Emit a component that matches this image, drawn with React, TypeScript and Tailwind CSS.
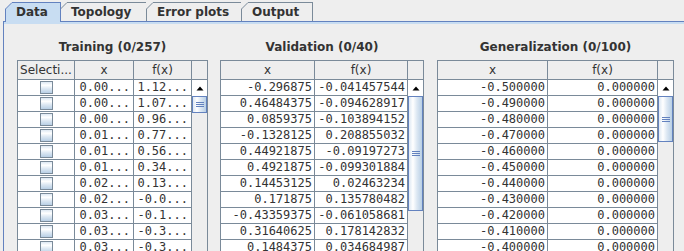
import { Fragment } from "react";

const sans = "font-['DejaVu_Sans',_'Liberation_Sans',_sans-serif]";
const mono = "font-['DejaVu_Sans_Mono',_'Liberation_Mono',_monospace]";

type Col = { label: string; w: string };

const training = {
  x: ["0.00...", "0.00...", "0.00...", "0.01...", "0.01...", "0.01...", "0.02...", "0.02...", "0.03...", "0.03...", "0.03..."],
  f: ["1.12...", "1.07...", "0.96...", "0.77...", "0.56...", "0.34...", "0.13...", "-0.0...", "-0.1...", "-0.3...", "-0.3..."],
};

const validation = [
  ["-0.296875", "-0.041457544"],
  ["0.46484375", "-0.094628917"],
  ["0.0859375", "-0.103894152"],
  ["-0.1328125", "0.208855032"],
  ["0.44921875", "-0.09197273"],
  ["0.4921875", "-0.099301884"],
  ["0.14453125", "0.02463234"],
  ["0.171875", "0.135780482"],
  ["-0.43359375", "-0.061058681"],
  ["0.31640625", "0.178142832"],
  ["0.1484375", "0.034684987"],
];

const generalization = Array.from({ length: 11 }, (_, i) => [
  (-0.5 + i * 0.01).toFixed(6),
  "0.000000",
]);

const Checkbox = () => (
  <div className="w-[13px] h-[13px] border border-[#7a8a99] bg-[linear-gradient(to_bottom,#dde8f3_0%,#ffffff_30%,#dde8f3_60%,#b8cfe5_100%)]" />
);

const Grip = () => (
  <svg width="8" height="5" viewBox="0 0 8 5">
    <rect x="0" y="0" width="8" height="1" fill="#6382bf" />
    <rect x="0" y="2" width="8" height="1" fill="#6382bf" />
    <rect x="0" y="4" width="8" height="1" fill="#6382bf" />
  </svg>
);

const ScrollCol = ({ thumb }: { thumb: string }) => (
  <div className="w-[15px] flex flex-col bg-[#eeeeee]">
    <div className="h-[19px] border-b border-[#7a8a99] bg-[#eeeeee]" />
    <div className="h-[16px] bg-white flex items-center justify-center">
      <svg width="8" height="5" viewBox="0 0 8 5">
        <path d="M4 0.5 L7.5 4.5 L0.5 4.5 Z" fill="#000" />
      </svg>
    </div>
    <div
      className={`${thumb} border border-[#6382bf] flex items-center justify-center bg-[linear-gradient(to_right,#dde8f3_0%,#ffffff_30%,#dde8f3_60%,#b8cfe5_100%)]`}
    >
      <Grip />
    </div>
  </div>
);

const Table = ({
  title,
  width,
  cols,
  rows,
  thumb,
  checks,
  pad,
}: {
  title: string;
  width: string;
  cols: Col[];
  rows: string[][];
  thumb: string;
  checks?: boolean;
  pad: string;
}) => (
  <div className={`${width} flex flex-col`}>
    <div className={`h-[14px] mt-[16px] leading-[14px] text-center font-bold text-[12px] text-[#333333] ${sans}`}>
      {title}
    </div>
    <div className="mt-[6px] border border-[#7a8a99] flex">
      <div className="flex flex-col">
        <div className="flex h-[19px] border-b border-[#7a8a99] bg-[#eeeeee]">
          {cols.map((c) => (
            <div
              key={c.label}
              className={`${c.w} border-r border-[#7a8a99] flex items-center justify-center text-[12px] text-[#333333] ${sans} overflow-hidden whitespace-nowrap`}
            >
              {c.label}
            </div>
          ))}
        </div>
        {rows.map((r, i) => (
          <div key={i} className="flex h-[16px] border-b border-[#7a8a99] bg-white">
            {checks && (
              <div className={`${cols[0].w} border-r border-[#7a8a99] flex items-center justify-center`}>
                <Checkbox />
              </div>
            )}
            {r.map((v, j) => (
              <div
                key={j}
                className={`${cols[j + (checks ? 1 : 0)].w} border-r border-[#7a8a99] flex items-center justify-end ${pad} text-[12px] leading-[15px] text-[#333333] ${mono} whitespace-nowrap overflow-hidden`}
              >
                {v}
              </div>
            ))}
          </div>
        ))}
      </div>
      <ScrollCol thumb={thumb} />
    </div>
  </div>
);

const Tab = ({ label, w, selected }: { label: string; w: string; selected?: boolean }) => (
  <div
    className={`relative ${w} h-[19px] border-t border-l border-r ${
      selected ? "border-[#6382bf] bg-[#c8ddf2] z-10 -mb-[1px] h-[20px]" : "border-[#7a8a99] bg-[#eeeeee]"
    } -ml-[1px] first:ml-0 flex items-start pt-[1px] pl-[10px] font-bold text-[12px] leading-[16px] text-[#333333] ${sans}`}
  >
    <svg className="absolute -top-[1px] -left-[1px]" width="7" height="7" viewBox="0 0 7 7">
      <path d="M0 0 L7 0 L7 0.5 L0.5 7 L0 7 Z" fill="#eeeeee" />
      <line x1="0.5" y1="7" x2="7" y2="0.5" stroke={selected ? "#6382bf" : "#7a8a99"} strokeWidth="1" />
    </svg>
    {label}
  </div>
);

const App = () => {
  return (
    <Fragment>
      <div className={`w-[684px] h-[251px] overflow-hidden bg-[#eeeeee] flex flex-col ${sans}`}>
        <div className="h-[1px] bg-[#cdcdcd]" />
        <div className="flex pl-[5px] mt-[2px]">
          <Tab label="Data" w="w-[56px]" selected />
          <Tab label="Topology" w="w-[87px]" />
          <Tab label="Error plots" w="w-[96px]" />
          <Tab label="Output" w="w-[72px]" />
        </div>
        <div className="ml-[3px] border-l border-t border-[#6382bf] flex-1 flex flex-col">
          <div className="h-[2px] bg-[#c8ddf2]" />
          <div className="flex ml-[13px]">
            <Table
              title="Training (0/257)"
              width="w-[191px]"
              cols={[
                { label: "Selecti...", w: "w-[57px]" },
                { label: "x", w: "w-[59px]" },
                { label: "f(x)", w: "w-[58px]" },
              ]}
              rows={training.x.map((x, i) => [x, training.f[i]])}
              thumb="h-[17px]"
              checks
              pad="pr-[3px]"
            />
            <div className="w-[12px]" />
            <Table
              title="Validation (0/40)"
              width="w-[204px]"
              cols={[
                { label: "x", w: "w-[94px]" },
                { label: "f(x)", w: "w-[93px]" },
              ]}
              rows={validation}
              thumb="h-[115px]"
              pad="pr-[2px]"
            />
            <div className="w-[13px]" />
            <Table
              title="Generalization (0/100)"
              width="w-[237px]"
              cols={[
                { label: "x", w: "w-[110px]" },
                { label: "f(x)", w: "w-[110px]" },
              ]}
              rows={generalization}
              thumb="h-[46px]"
              pad="pr-[2px]"
            />
          </div>
        </div>
      </div>
    </Fragment>
  );
};

export default App;
